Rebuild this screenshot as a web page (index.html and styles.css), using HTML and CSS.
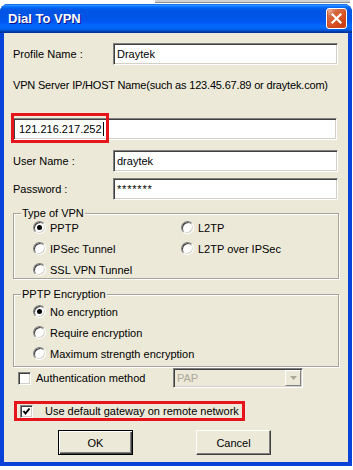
FILE: index.html
```html
<!DOCTYPE html>
<html lang="en">

<head>
  <meta charset="UTF-8" />
  <title>Dial To VPN</title>
  <link rel="stylesheet" href="styles.css">
</head>

<body>

  <div class="backdrop">
    <div class="strip"></div>
  </div>

  <div class="window">
    <div class="titlebar">
      <span class="title">Dial To VPN</span>
      <div class="close">
        <svg width="19" height="19" viewBox="0 0 19 19">
          <path d="M5.5 5.5 L13.5 13.5 M13.5 5.5 L5.5 13.5" stroke="#fff" stroke-width="2.2" stroke-linecap="square" />
        </svg>
      </div>
    </div>

    <div class="client">
      <div class="row">
        <span class="lbl">Profile Name :</span>
        <div class="textbox wide">Draytek</div>
      </div>

      <p class="hint">VPN Server IP/HOST Name(such as 123.45.67.89 or draytek.com)</p>

      <div class="row host">
        <div class="textbox full">121.216.217.252<span class="caret"></span></div>
        <div class="mark"></div>
      </div>

      <div class="row user">
        <span class="lbl">User Name :</span>
        <div class="textbox wide">draytek</div>
      </div>

      <div class="row pass">
        <span class="lbl">Password :</span>
        <div class="textbox wide stars">*******</div>
      </div>

      <div class="group vpn-type">
        <div class="legend">Type of VPN</div>
        <div class="choices two">
          <div class="opt"><span class="radio on"></span>PPTP</div>
          <div class="opt"><span class="radio"></span>L2TP</div>
          <div class="opt"><span class="radio"></span>IPSec Tunnel</div>
          <div class="opt"><span class="radio"></span>L2TP over IPSec</div>
          <div class="opt"><span class="radio"></span>SSL VPN Tunnel</div>
        </div>
      </div>

      <div class="group encryption">
        <div class="legend">PPTP Encryption</div>
        <div class="choices">
          <div class="opt"><span class="radio on"></span>No encryption</div>
          <div class="opt"><span class="radio"></span>Require encryption</div>
          <div class="opt"><span class="radio"></span>Maximum strength encryption</div>
        </div>
      </div>

      <div class="auth">
        <span class="check"></span>
        <span class="auth-label">Authentication method</span>
        <div class="select">
          <span class="select-value">PAP</span>
          <span class="select-btn">
            <svg width="7" height="4" viewBox="0 0 7 4">
              <path d="M0 0 H7 L3.5 4 Z" fill="#aca899" />
            </svg>
          </span>
        </div>
      </div>

      <div class="gateway">
        <span class="check on">
          <svg width="11" height="11" viewBox="0 0 11 11">
            <path d="M2.5 5 L4.5 7.5 L8.5 2.5" stroke="#000" stroke-width="2" fill="none" />
          </svg>
        </span>
        <span class="gateway-label">Use default gateway on remote network</span>
      </div>

      <div class="actions">
        <div class="btn default">OK</div>
        <div class="btn">Cancel</div>
      </div>
    </div>
  </div>

</body>

</html>
```

FILE: styles.css
```css
* {
  box-sizing: border-box;
}

body {
  margin: 0;
  background: #fff;
  font-family: "Liberation Sans", Arial, sans-serif;
  font-size: 11px;
  color: #000;
  overflow: hidden;
}

.backdrop {
  height: 4px;
}

.strip {
  margin-left: 155px;
  width: 195px;
  height: 3px;
  background: #d2d2d2;
  border-bottom: 1px solid #8e8e8e;
}

.window {
  width: 352px;
  background: #0842d8;
  border-radius: 8px 8px 0 0;
  overflow: hidden;
  padding-bottom: 4px;
}

.titlebar {
  height: 29px;
  display: flex;
  align-items: center;
  justify-content: space-between;
  padding: 0 5px 0 8px;
  background: linear-gradient(180deg, #0058ee 0%, #3593ff 4%, #288eff 6%, #127dff 8%, #036ffc 10%, #0262ee 14%, #0057e5 20%, #0054e3 24%, #0055eb 56%, #005bf5 66%, #026afe 76%, #0062ef 86%, #0052d6 92%, #0040ab 94%, #003092 100%);
}

.title {
  color: #fff;
  font-weight: bold;
  font-size: 13px;
  text-shadow: 1px 1px #0f1089;
}

.close {
  width: 21px;
  height: 21px;
  border: 1px solid #fff;
  border-radius: 3px;
  background: radial-gradient(circle at 90% 90%, #c43a10 0, #dc5a2a 55%, #d06a48 70%, #f7b9a0 90%, #fff 100%);
  box-shadow: inset 0 -1px 2px 1px #d2461e;
  display: flex;
}

.client {
  margin: 0 4px;
  height: 429px;
  background: #ece9d8;
  padding: 10px 9px 0;
}

.row {
  display: flex;
  align-items: center;
  height: 22px;
}

.lbl {
  width: 100px;
}

.textbox {
  height: 22px;
  display: flex;
  align-items: center;
  padding: 0 3px;
  background: #fff;
  border: 1px solid;
  border-color: #808080 #fff #fff #808080;
  box-shadow: inset 1px 1px #404040, inset -1px -1px #d4d0c8;
}

.textbox.wide {
  width: 225px;
}

.textbox.full {
  width: 324px;
  padding-left: 5px;
}

.textbox.stars {
  letter-spacing: 0.8px;
}

.caret {
  width: 1px;
  height: 14px;
  margin-left: 1px;
  background: #000;
}

.hint {
  margin: 13px 0 0;
  line-height: 14px;
  letter-spacing: -0.18px;
}

.host {
  margin-top: 26px;
  position: relative;
}

.mark {
  position: absolute;
  left: -2px;
  top: -5px;
  width: 98px;
  height: 30px;
  border: 3px solid #e5151b;
}

.user {
  margin-top: 10px;
}

.pass {
  margin-top: 6px;
}

.group {
  border: 1px solid #a7a497;
  box-shadow: inset 1px 1px #fff, 1px 1px #fff;
}

.vpn-type {
  margin-top: 13px;
  height: 66px;
}

.encryption {
  margin-top: 15px;
  height: 73px;
}

.legend {
  display: table;
  margin: -7px 0 0 7px;
  padding: 0 1px;
  line-height: 13px;
  background: #ece9d8;
}

.choices {
  display: grid;
  grid-auto-rows: 21px;
  padding-left: 19px;
}

.choices.two {
  grid-template-columns: 148px auto;
  margin-top: -3px;
}

.opt {
  display: flex;
  align-items: center;
  gap: 4px;
}

.radio {
  position: relative;
  flex: none;
  width: 13px;
  height: 13px;
  border-radius: 50%;
  background: #fff;
  border: 1px solid;
  border-color: #808080 #fff #fff #808080;
  box-shadow: inset 1px 1px #404040, inset -1px -1px #d4d0c8;
}

.radio.on::after {
  content: '';
  position: absolute;
  left: 3px;
  top: 3px;
  width: 5px;
  height: 5px;
  border-radius: 50%;
  background: #000;
}

.check {
  flex: none;
  display: flex;
  width: 13px;
  height: 13px;
  background: #fff;
  border: 1px solid;
  border-color: #808080 #fff #fff #808080;
  box-shadow: inset 1px 1px #404040, inset -1px -1px #d4d0c8;
}

.auth {
  display: flex;
  align-items: center;
  height: 20px;
  margin-top: 1px;
  padding-left: 5px;
}

.auth-label {
  width: 137px;
  margin-left: 5px;
}

.select {
  width: 130px;
  height: 20px;
  display: flex;
  align-items: center;
  justify-content: space-between;
  padding-left: 3px;
  background: #ece9d8;
  border: 1px solid;
  border-color: #808080 #fff #fff #808080;
  box-shadow: inset 1px 1px #404040, inset -1px -1px #d4d0c8;
  color: #aca899;
}

.select-btn {
  width: 16px;
  height: 16px;
  margin-right: 1px;
  display: flex;
  align-items: center;
  justify-content: center;
  background: #ece9d8;
  border: 1px solid;
  border-color: #fff #808080 #808080 #fff;
}

.gateway {
  display: flex;
  align-items: center;
  width: 231px;
  height: 20px;
  margin: 13px 0 0 1px;
  padding-left: 3px;
  border: 3px solid #e5151b;
}

.gateway-label {
  margin-left: 12px;
}

.actions {
  display: flex;
  gap: 63px;
  margin-top: 9px;
  padding-left: 45px;
}

.btn {
  width: 75px;
  height: 25px;
  display: flex;
  align-items: center;
  justify-content: center;
  background: #ece9d8;
  border: 1px solid;
  border-color: #fff #404040 #404040 #fff;
  box-shadow: inset -1px -1px #808080;
}

.btn.default {
  border-color: #000;
  box-shadow: inset 1px 1px #fff, inset -1px -1px #404040, inset -2px -2px #808080;
}
```
